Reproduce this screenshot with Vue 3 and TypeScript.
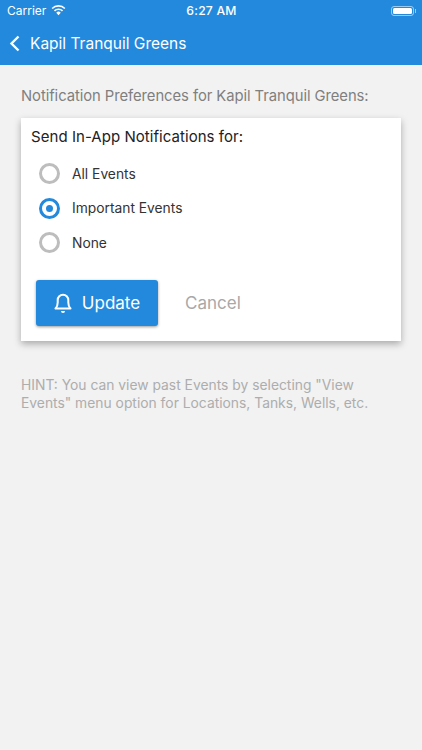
<script setup lang="ts">
const options = [
  { label: 'All Events', on: false },
  { label: 'Important Events', on: true },
  { label: 'None', on: false },
]
</script>

<template>
  <div class="page">
    <header class="head">
      <div class="status">
        <div class="status-left">
          <span>Carrier</span>
          <svg class="wifi" width="15" height="12" viewBox="0 0 16 12">
            <path d="M8 11.500 5.600 8.900a3.400 3.400 0 0 1 4.800 0Z" fill="#fff" />
            <path d="M3.700 7a6.100 6.100 0 0 1 8.600 0" fill="none" stroke="#fff" stroke-width="1.700" />
            <path d="M1.200 4.400a9.700 9.700 0 0 1 13.600 0" fill="none" stroke="#fff" stroke-width="1.700" />
          </svg>
        </div>
        <span class="time">6:27 AM</span>
        <div class="status-right">
          <div class="battery"><div class="battery-fill"></div></div>
          <div class="battery-cap"></div>
        </div>
      </div>
      <div class="nav">
        <svg class="back" width="12" height="17" viewBox="0 0 12 17">
          <path d="M9.500 1.500 2.500 8.500l7 7" fill="none" stroke="#fff" stroke-width="2.400" />
        </svg>
        <span class="title">Kapil Tranquil Greens</span>
      </div>
    </header>

    <main class="body">
      <p class="lead">Notification Preferences for Kapil Tranquil Greens:</p>
      <section class="card">
        <h2 class="card-title">Send In-App Notifications for:</h2>
        <div class="options">
          <div v-for="o in options" :key="o.label" class="option">
            <span class="radio" :class="{ on: o.on }"><span v-if="o.on" class="dot"></span></span>
            <span class="option-label">{{ o.label }}</span>
          </div>
        </div>
        <div class="actions">
          <button class="update" type="button">
            <svg width="20" height="22" viewBox="0 0 20 22">
              <path d="M2.500 16.500h15c-1.500-1.500-2.200-3.200-2.200-6V8a5.300 5.300 0 0 0-10.600 0v2.500c0 2.800-.7 4.500-2.200 6Z" fill="none" stroke="#fff" stroke-width="2" stroke-linejoin="round" />
              <path d="M8 19a2 2 0 0 0 4 0Z" fill="#fff" />
            </svg>
            <span>Update</span>
          </button>
          <button class="cancel" type="button">Cancel</button>
        </div>
      </section>
      <p class="hint">HINT: You can view past Events by selecting "View Events" menu option for Locations, Tanks, Wells, etc.</p>
    </main>
  </div>
</template>

<style>
html, body { margin: 0; background: #f2f2f2; }
</style>

<style scoped>
.page {
  width: 422px;
  height: 750px;
  overflow: hidden;
  background: #f2f2f2;
  font-family: Inter, "Liberation Sans", sans-serif;
}
.head { background: #2389dc; height: 65px; color: #fff; }
.status {
  height: 21px;
  display: grid;
  grid-template-columns: 1fr auto 1fr;
  align-items: center;
  padding: 0 6px 0 7px;
  font-size: 12px;
}
.status-left { display: flex; align-items: center; gap: 5px; }
.wifi { display: block; margin-top: -2px; }
.time { font-weight: 500; font-size: 12.200px; letter-spacing: .2px; }
.status-right { display: flex; justify-content: flex-end; align-items: center; }
.battery {
  width: 23px;
  height: 10px;
  box-sizing: border-box;
  border: 1px solid rgba(255,255,255,.55);
  border-radius: 3px;
  padding: 1px;
}
.battery-fill { width: 100%; height: 100%; background: #fff; border-radius: 1.500px; }
.battery-cap { width: 1px; height: 4px; margin-left: 1px; background: rgba(255,255,255,.55); }
.nav { height: 44px; display: flex; align-items: center; padding-left: 9px; gap: 9px; }
.back { display: block; }
.title { font-size: 15.500px; }
.body { padding: 22px 21px 0; }
.lead { margin: 0 0 13px; font-size: 14.800px; line-height: 18px; color: #7f7f7f; letter-spacing: -.06px; }
.card {
  height: 223px;
  box-sizing: border-box;
  background: #fff;
  box-shadow: 0 3px 7px rgba(0,0,0,.3);
  padding: 10px 0 0;
}
.card-title { margin: 0 0 0 10px; font-size: 15px; line-height: 18px; font-weight: 400; color: #222; letter-spacing: .05px; }
.options { margin-top: 10.500px; padding-left: 18px; }
.option { height: 34.600px; display: flex; align-items: center; }
.radio {
  width: 21px;
  height: 21px;
  box-sizing: border-box;
  border: 3px solid #bdbdbd;
  border-radius: 50%;
  display: flex;
  align-items: center;
  justify-content: center;
}
.radio.on { border-color: #2389dc; }
.dot { width: 7px; height: 7px; border-radius: 50%; background: #2389dc; }
.option-label { margin-left: 12px; font-size: 13.800px; color: #333; }
.actions { display: flex; align-items: center; margin: 19.500px 0 0 15px; }
.update {
  width: 122px;
  height: 46px;
  border: 0;
  border-radius: 3px;
  background: #2389dc;
  color: #fff;
  font: inherit;
  font-size: 17px;
  display: flex;
  align-items: center;
  justify-content: center;
  gap: 9px;
  padding: 0 1px 0 0;
  box-shadow: 0 1px 3px rgba(0,0,0,.4);
}
.cancel {
  border: 0;
  background: none;
  padding: 0;
  margin-left: 27px;
  font: inherit;
  font-size: 17px;
  color: #a8a8a8;
}
.hint { margin: 35px 0 0; padding-right: 8px; font-size: 13.850px; line-height: 18px; color: #adadad; }
</style>
